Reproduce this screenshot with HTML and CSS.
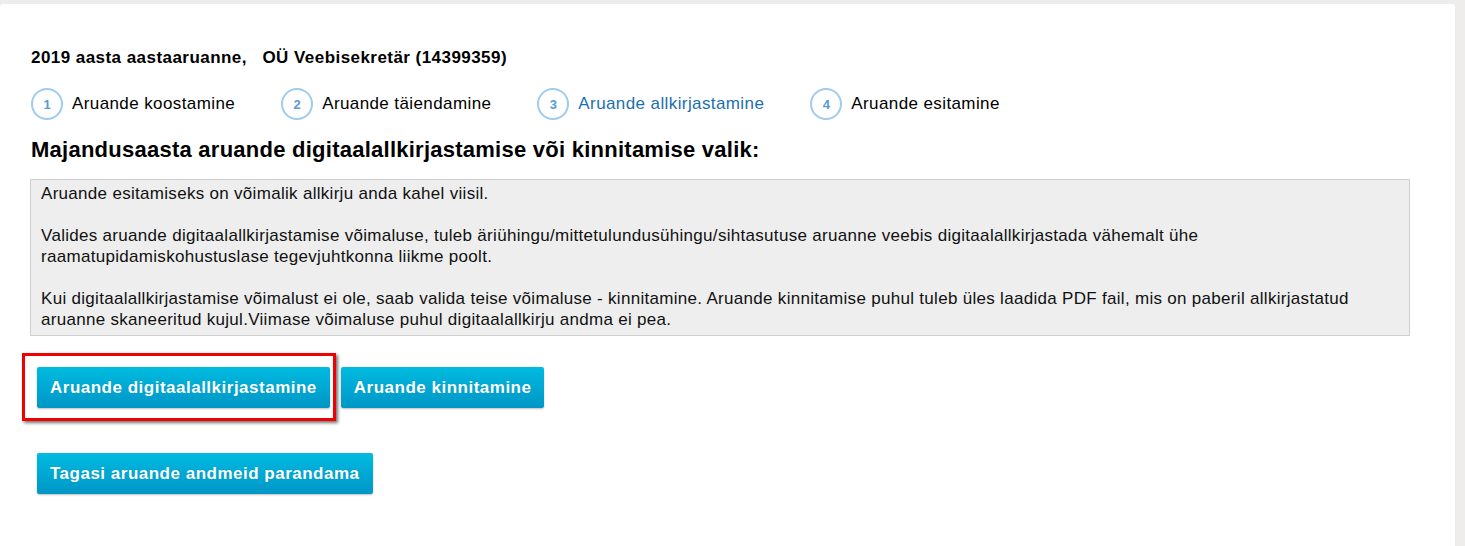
FILE: index.html
```html
<!DOCTYPE html>
<html lang="et">
<head>
<meta charset="utf-8">
<title>Aastaaruanne</title>
<link rel="stylesheet" href="styles.css">
</head>
<body>
<div class="page">
  <div class="panel">
    <div class="report-title">2019 aasta aastaaruanne,&nbsp;&nbsp; OÜ Veebisekretär (14399359)</div>
    <div class="steps">
      <div class="step"><span class="num">1</span><span class="label">Aruande koostamine</span></div>
      <div class="step"><span class="num">2</span><span class="label">Aruande täiendamine</span></div>
      <div class="step active"><span class="num">3</span><span class="label">Aruande allkirjastamine</span></div>
      <div class="step"><span class="num">4</span><span class="label">Aruande esitamine</span></div>
    </div>
    <h1 class="heading">Majandusaasta aruande digitaalallkirjastamise või kinnitamise valik:</h1>
    <div class="info">
      <p class="para"><span class="line">Aruande esitamiseks on võimalik allkirju anda kahel viisil.</span></p>
      <p class="para"><span class="line">Valides aruande digitaalallkirjastamise võimaluse, tuleb äriühingu/mittetulundusühingu/sihtasutuse aruanne veebis digitaalallkirjastada vähemalt ühe</span>
        <span class="line">raamatupidamiskohustuslase tegevjuhtkonna liikme poolt.</span></p>
      <p class="para"><span class="line">Kui digitaalallkirjastamise võimalust ei ole, saab valida teise võimaluse - kinnitamine. Aruande kinnitamise puhul tuleb üles laadida PDF fail, mis on paberil allkirjastatud</span>
        <span class="line">aruanne skaneeritud kujul.Viimase võimaluse puhul digitaalallkirju andma ei pea.</span></p>
    </div>
    <div class="actions">
      <div class="highlight-wrap">
        <button class="btn">Aruande digitaalallkirjastamine</button>
        <span class="highlight"></span>
      </div>
      <button class="btn">Aruande kinnitamine</button>
    </div>
    <div class="back">
      <button class="btn">Tagasi aruande andmeid parandama</button>
    </div>
  </div>
</div>
</body>
</html>
```

FILE: styles.css
```css
html, body {
  margin: 0;
  padding: 0;
  height: 100%;
}
body {
  background: #eeedeb;
  font-family: "Liberation Sans", Arial, sans-serif;
  color: #000;
  overflow: hidden;
}
.page {
  padding: 4px 10px 0 0;
  height: 100%;
  box-sizing: border-box;
}
.panel {
  background: #fff;
  height: 100%;
  box-sizing: border-box;
  padding: 44px 30px 0 31px;
  border-radius: 3px 3px 0 0;
}
.report-title {
  font-weight: bold;
  font-size: 17px;
  line-height: 20px;
  letter-spacing: 0.45px;
}
.steps {
  display: flex;
  gap: 46px;
  margin-top: 20px;
  height: 32px;
  align-items: center;
}
.step {
  display: flex;
  align-items: center;
  gap: 9px;
}
.num {
  width: 28px;
  height: 28px;
  border: 2px solid #9fcbee;
  border-radius: 50%;
  display: flex;
  align-items: center;
  justify-content: center;
  font-size: 13px;
  font-weight: bold;
  color: #5b99d2;
}
.label {
  font-size: 17px;
  letter-spacing: 0.4px;
}
.step.active .label {
  color: #1b6fae;
}
.heading {
  font-size: 22px;
  font-weight: bold;
  margin: 17px 0 0 0;
  line-height: 26px;
  letter-spacing: 0.25px;
}
.info {
  margin: 16px 15px 0 -1px;
  background: #eeeeee;
  border: 1px solid #cfcfcf;
  padding: 3px 10px 5px 10px;
  font-size: 17px;
  line-height: 21px;
  letter-spacing: 0.3px;
  color: #111;
}
.para {
  margin: 0 0 21px 0;
}
.para:last-child {
  margin-bottom: 0;
}
.line {
  display: block;
  white-space: nowrap;
}
.actions {
  display: flex;
  gap: 11px;
  margin-top: 31px;
  padding-left: 6px;
}
.highlight-wrap {
  position: relative;
  display: flex;
}
.highlight {
  position: absolute;
  left: -15px;
  top: -14px;
  right: -6px;
  bottom: -13px;
  border: 3px solid #f00000;
  box-shadow: 2px 2px 3px rgba(0,0,0,0.55);
  pointer-events: none;
}
.btn {
  font-family: "Liberation Sans", Arial, sans-serif;
  font-weight: bold;
  font-size: 17px;
  letter-spacing: 0.5px;
  color: #fff;
  height: 41px;
  padding: 0 13px;
  border: none;
  border-radius: 2px;
  background: linear-gradient(#00bbe0, #0096c6);
  box-shadow: 0 1px 2px rgba(0,0,0,0.25);
  text-shadow: 0 0 1px rgba(0,0,0,0.15);
  cursor: pointer;
}
.back {
  margin-top: 45px;
  padding-left: 6px;
}
```
